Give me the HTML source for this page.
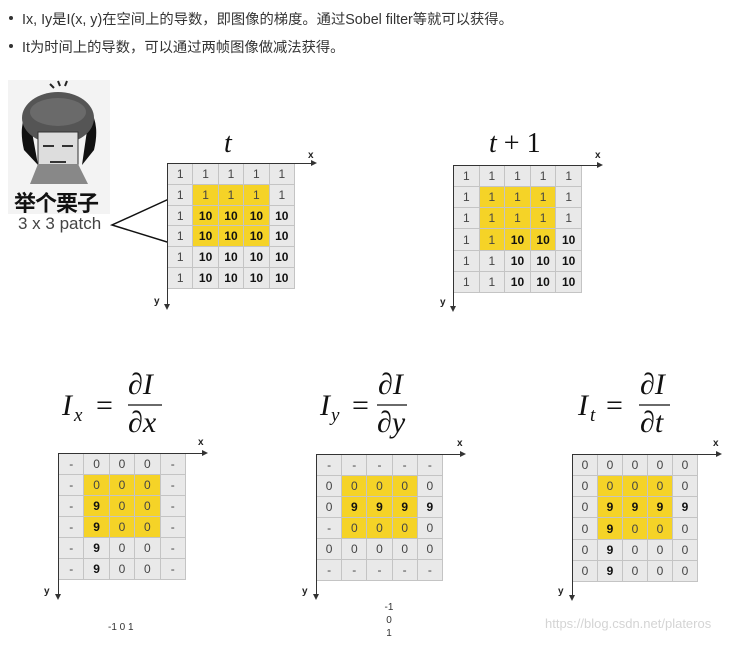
<!DOCTYPE html>
<html><head><meta charset="utf-8"><style>
body{margin:0;width:748px;height:646px;background:#fff;position:relative;overflow:hidden;font-family:"Liberation Sans","Noto Sans CJK SC",sans-serif;}
.a{position:absolute}
.bl{font-size:14.3px;color:#333;left:22px;white-space:nowrap}
.dot{position:absolute;left:-13px;top:8px;width:4px;height:4px;border-radius:50%;background:#333}
table{position:absolute;border-collapse:collapse;table-layout:fixed}
td{background:#e9e9e9;border:1px solid #c4c4c4;text-align:center;font-size:12px;color:#444;padding:0}
td.y{background:#f5d327}
td.b{font-weight:bold;color:#111}
.hx{position:absolute;height:0;border-top:1.5px solid #333}
.hx:after{content:"";position:absolute;right:-2px;top:-4.5px;border-left:6px solid #333;border-top:3px solid transparent;border-bottom:3px solid transparent}
.vy{position:absolute;width:0;border-left:1.5px solid #333}
.vy:after{content:"";position:absolute;bottom:-2px;left:-4px;border-top:6px solid #333;border-left:3px solid transparent;border-right:3px solid transparent}
.lab{position:absolute;font-size:10px;font-weight:bold;color:#222}
.m{font-family:"Liberation Serif",serif;font-style:italic;position:absolute;color:#111}
</style></head><body>
<div class="a bl" style="top:8px"><span class="dot"></span>Ix, Iy是I(x, y)在空间上的导数，即图像的梯度。通过Sobel filter等就可以获得。</div>
<div class="a bl" style="top:36px"><span class="dot"></span>It为时间上的导数，可以通过两帧图像做减法获得。</div>

<!-- meme -->
<div class="a" style="left:8px;top:80px;width:102px;height:134px;background:#f3f3f3"></div>
<svg class="a" style="left:8px;top:80px" width="102" height="134">
<path d="M52 6 l-2 -5 M57 6 l2 -5 M46 8 l-4 -4" stroke="#222" stroke-width="2"/>
<path d="M16 70 Q10 45 20 30 L30 85 Z M86 70 Q92 45 82 30 L74 85 Z" fill="#111"/>
<ellipse cx="50" cy="38" rx="36" ry="26" fill="#555"/>
<ellipse cx="50" cy="32" rx="28" ry="14" fill="#6a6a6a"/>
<rect x="30" y="52" width="40" height="44" fill="#ddd" stroke="#333"/>
<path d="M35 66 h11 M54 66 h11 M42 82 h16" stroke="#333" stroke-width="2"/>
<path d="M22 104 L30 84 L70 84 L80 104 Z" fill="#888"/>
</svg>
<div class="a" style="left:14px;top:186px;font-size:22px;font-weight:bold;color:#111;letter-spacing:-1px">举个栗子</div>
<div class="a" style="left:18px;top:214px;font-size:17px;color:#444">3 x 3 patch</div>
<svg class="a" style="left:0;top:0" width="300" height="300"><path d="M193 188 L112 225 L193 250" stroke="#111" stroke-width="1.5" fill="none"/></svg>

<!-- t grid -->
<div class="m" style="left:224px;top:128px;font-size:28px">t</div>
<table style="left:167px;top:163px;width:128px;height:126px">
<tr><td>1</td><td>1</td><td>1</td><td>1</td><td>1</td></tr>
<tr><td>1</td><td class="y">1</td><td class="y">1</td><td class="y">1</td><td>1</td></tr>
<tr><td>1</td><td class="y b">10</td><td class="y b">10</td><td class="y b">10</td><td class="b">10</td></tr>
<tr><td>1</td><td class="y b">10</td><td class="y b">10</td><td class="y b">10</td><td class="b">10</td></tr>
<tr><td>1</td><td class="b">10</td><td class="b">10</td><td class="b">10</td><td class="b">10</td></tr>
<tr><td>1</td><td class="b">10</td><td class="b">10</td><td class="b">10</td><td class="b">10</td></tr>
</table>
<div class="hx" style="left:167px;top:163px;width:148px"></div>
<div class="vy" style="left:167px;top:163px;height:145px"></div>
<div class="lab" style="left:308px;top:150px">x</div>
<div class="lab" style="left:154px;top:296px">y</div>

<!-- t+1 grid -->
<div class="m" style="left:489px;top:128px;font-size:28px;font-style:normal"><i>t</i> + 1</div>
<table style="left:453px;top:165px;width:129px;height:128px">
<tr><td>1</td><td>1</td><td>1</td><td>1</td><td>1</td></tr>
<tr><td>1</td><td class="y">1</td><td class="y">1</td><td class="y">1</td><td>1</td></tr>
<tr><td>1</td><td class="y">1</td><td class="y">1</td><td class="y">1</td><td>1</td></tr>
<tr><td>1</td><td class="y">1</td><td class="y b">10</td><td class="y b">10</td><td class="b">10</td></tr>
<tr><td>1</td><td>1</td><td class="b">10</td><td class="b">10</td><td class="b">10</td></tr>
<tr><td>1</td><td>1</td><td class="b">10</td><td class="b">10</td><td class="b">10</td></tr>
</table>
<div class="hx" style="left:453px;top:165px;width:148px"></div>
<div class="vy" style="left:453px;top:165px;height:145px"></div>
<div class="lab" style="left:595px;top:150px">x</div>
<div class="lab" style="left:440px;top:297px">y</div>

<!-- formulas -->
<svg class="a" style="left:0;top:360px" width="748" height="90" font-family="Liberation Serif,serif" font-size="30" fill="#111">
<text x="62" y="55" font-style="italic">I</text><text x="74" y="61" font-size="19" font-style="italic">x</text>
<text x="96" y="55">=</text><text x="128" y="34"><tspan>∂</tspan><tspan font-style="italic">I</tspan></text>
<line x1="128" y1="45" x2="162" y2="45" stroke="#111" stroke-width="1.3"/>
<text x="128" y="72"><tspan>∂</tspan><tspan font-style="italic">x</tspan></text>

<text x="320" y="55" font-style="italic">I</text><text x="331" y="61" font-size="19" font-style="italic">y</text>
<text x="352" y="55">=</text><text x="378" y="34"><tspan>∂</tspan><tspan font-style="italic">I</tspan></text>
<line x1="377" y1="45" x2="407" y2="45" stroke="#111" stroke-width="1.3"/>
<text x="377" y="72"><tspan>∂</tspan><tspan font-style="italic">y</tspan></text>

<text x="578" y="55" font-style="italic">I</text><text x="590" y="61" font-size="19" font-style="italic">t</text>
<text x="606" y="55">=</text><text x="640" y="34"><tspan>∂</tspan><tspan font-style="italic">I</tspan></text>
<line x1="639" y1="45" x2="670" y2="45" stroke="#111" stroke-width="1.3"/>
<text x="640" y="72"><tspan>∂</tspan><tspan font-style="italic">t</tspan></text>
</svg>

<!-- Ix grid -->
<table style="left:58px;top:453px;width:128px;height:127px">
<tr><td>-</td><td>0</td><td>0</td><td>0</td><td>-</td></tr>
<tr><td>-</td><td class="y">0</td><td class="y">0</td><td class="y">0</td><td>-</td></tr>
<tr><td>-</td><td class="y b">9</td><td class="y">0</td><td class="y">0</td><td>-</td></tr>
<tr><td>-</td><td class="y b">9</td><td class="y">0</td><td class="y">0</td><td>-</td></tr>
<tr><td>-</td><td class="b">9</td><td>0</td><td>0</td><td>-</td></tr>
<tr><td>-</td><td class="b">9</td><td>0</td><td>0</td><td>-</td></tr>
</table>
<div class="hx" style="left:58px;top:453px;width:148px"></div>
<div class="vy" style="left:58px;top:453px;height:145px"></div>
<div class="lab" style="left:198px;top:437px">x</div>
<div class="lab" style="left:44px;top:586px">y</div>
<div class="a" style="left:108px;top:622px;font-size:10px;color:#333">-1 0 1</div>

<!-- Iy grid -->
<table style="left:316px;top:454px;width:127px;height:127px">
<tr><td>-</td><td>-</td><td>-</td><td>-</td><td>-</td></tr>
<tr><td>0</td><td class="y">0</td><td class="y">0</td><td class="y">0</td><td>0</td></tr>
<tr><td>0</td><td class="y b">9</td><td class="y b">9</td><td class="y b">9</td><td class="b">9</td></tr>
<tr><td>-</td><td class="y">0</td><td class="y">0</td><td class="y">0</td><td>0</td></tr>
<tr><td>0</td><td>0</td><td>0</td><td>0</td><td>0</td></tr>
<tr><td>-</td><td>-</td><td>-</td><td>-</td><td>-</td></tr>
</table>
<div class="hx" style="left:316px;top:454px;width:148px"></div>
<div class="vy" style="left:316px;top:454px;height:144px"></div>
<div class="lab" style="left:457px;top:438px">x</div>
<div class="lab" style="left:302px;top:586px">y</div>
<div class="a" style="left:384px;top:601px;font-size:10px;color:#333;text-align:center;line-height:13px;width:10px">-1<br>0<br>1</div>

<!-- It grid -->
<table style="left:572px;top:454px;width:126px;height:128px">
<tr><td>0</td><td>0</td><td>0</td><td>0</td><td>0</td></tr>
<tr><td>0</td><td class="y">0</td><td class="y">0</td><td class="y">0</td><td>0</td></tr>
<tr><td>0</td><td class="y b">9</td><td class="y b">9</td><td class="y b">9</td><td class="b">9</td></tr>
<tr><td>0</td><td class="y b">9</td><td class="y">0</td><td class="y">0</td><td>0</td></tr>
<tr><td>0</td><td class="b">9</td><td>0</td><td>0</td><td>0</td></tr>
<tr><td>0</td><td class="b">9</td><td>0</td><td>0</td><td>0</td></tr>
</table>
<div class="hx" style="left:572px;top:454px;width:148px"></div>
<div class="vy" style="left:572px;top:454px;height:145px"></div>
<div class="lab" style="left:713px;top:438px">x</div>
<div class="lab" style="left:558px;top:586px">y</div>
<div class="a" style="left:545px;top:616px;font-size:13px;color:#d4d4d4">https://blog.csdn.net/plateros</div>
</body></html>
